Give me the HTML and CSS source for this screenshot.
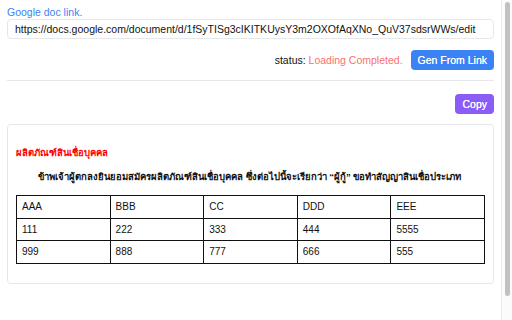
FILE: index.html
```html
<!DOCTYPE html>
<html lang="th">
<head>
<meta charset="utf-8">
<title>Google doc link</title>
<link rel="stylesheet" href="styles.css">
</head>
<body>
<div class="page">
  <div class="wrap">
    <label class="label" for="link">Google doc link.</label>
    <input id="link" class="input" type="text" value="https://docs.google.com/document/d/1fSyTISg3cIKITKUysY3m2OXOfAqXNo_QuV37sdsrWWs/edit">
    <div class="status-row">
      <span class="status">status: <span class="status-ok">Loading Completed.</span></span>
      <button class="btn btn-blue">Gen From Link</button>
    </div>
    <hr class="rule">
    <div class="copy-row">
      <button class="btn btn-purple">Copy</button>
    </div>
    <div class="card">
      <p class="title">ผลิตภัณฑ์สินเชื่อบุคคล</p>
      <p class="para">ข้าพเจ้าผู้ตกลงยินยอมสมัครผลิตภัณฑ์สินเชื่อบุคคล ซึ่งต่อไปนี้จะเรียกว่า “ผู้กู้” ขอทำสัญญาสินเชื่อประเภท</p>
      <table class="tbl">
        <tr><td>AAA</td><td>BBB</td><td>CC</td><td>DDD</td><td>EEE</td></tr>
        <tr><td>111</td><td>222</td><td>333</td><td>444</td><td>5555</td></tr>
        <tr><td>999</td><td>888</td><td>777</td><td>666</td><td>555</td></tr>
      </table>
    </div>
  </div>
  <div class="scrollbar"><div class="thumb"></div></div>
</div>
</body>
</html>
```
FILE: styles.css
```css
html, body {
  margin: 0;
  padding: 0;
  background: #fff;
  height: 320px;
  overflow: hidden;
}
body {
  font-family: "Liberation Sans", Arial, sans-serif;
  font-size: 10.5px;
  color: #111;
}
.page {
  display: flex;
  height: 320px;
}
.wrap {
  flex: 1;
  min-width: 0;
  padding: 6px 7px 0 7px;
  display: flex;
  flex-direction: column;
}
.scrollbar {
  flex: none;
  width: 11px;
  box-sizing: border-box;
  border-left: 1px solid #ededed;
  background: #fbfbfb;
  padding: 2px 2px 0 3px;
}
.thumb {
  height: 294px;
  border-radius: 4px;
  background: #c1c1c1;
}
.label {
  color: #3b82f6;
  font-size: 10.5px;
  line-height: 13px;
}
.input {
  box-sizing: border-box;
  height: 20px;
  border: 1px solid #e5e7eb;
  border-radius: 4px;
  padding: 0 7px;
  font-family: inherit;
  font-size: 10.5px;
  color: #111;
  outline: none;
  margin: 0;
  width: 100%;
}
.status-row {
  margin-top: 11px;
  display: flex;
  justify-content: flex-end;
  align-items: center;
  gap: 8px;
}
.status {
  font-size: 10.5px;
}
.status-ok {
  color: #f87171;
}
.btn {
  border: none;
  border-radius: 4px;
  color: #fff;
  font-family: inherit;
  font-size: 10.5px;
  font-weight: normal;
  height: 20px;
  padding: 0 7px;
  margin: 0;
  white-space: nowrap;
  text-shadow: 0 0 0.4px #fff;
}
.btn-blue {
  background: #3b82f6;
}
.btn-purple {
  background: #8b5cf6;
}
.rule {
  border: none;
  border-top: 1px solid #e5e7eb;
  margin: 10px 0 0 0;
}
.copy-row {
  margin-top: 13px;
  display: flex;
  justify-content: flex-end;
}
.card {
  margin-top: 10px;
  border: 1px solid #e5e7eb;
  border-radius: 4px;
  padding: 20px 8px 19px 8px;
}
.title {
  margin: 0;
  color: #ff0000;
  font-weight: bold;
  font-size: 9.5px;
  line-height: 16px;
}
.para {
  margin: 8px 0 0 0;
  text-indent: 22px;
  font-weight: bold;
  font-size: 9.5px;
  line-height: 16px;
  white-space: nowrap;
}
.tbl {
  margin-top: 10px;
  width: 100%;
  border-collapse: collapse;
  table-layout: fixed;
  font-size: 10px;
}
.tbl td {
  border: 1px solid #111;
  height: 21.5px;
  padding: 0 5px;
}
```
